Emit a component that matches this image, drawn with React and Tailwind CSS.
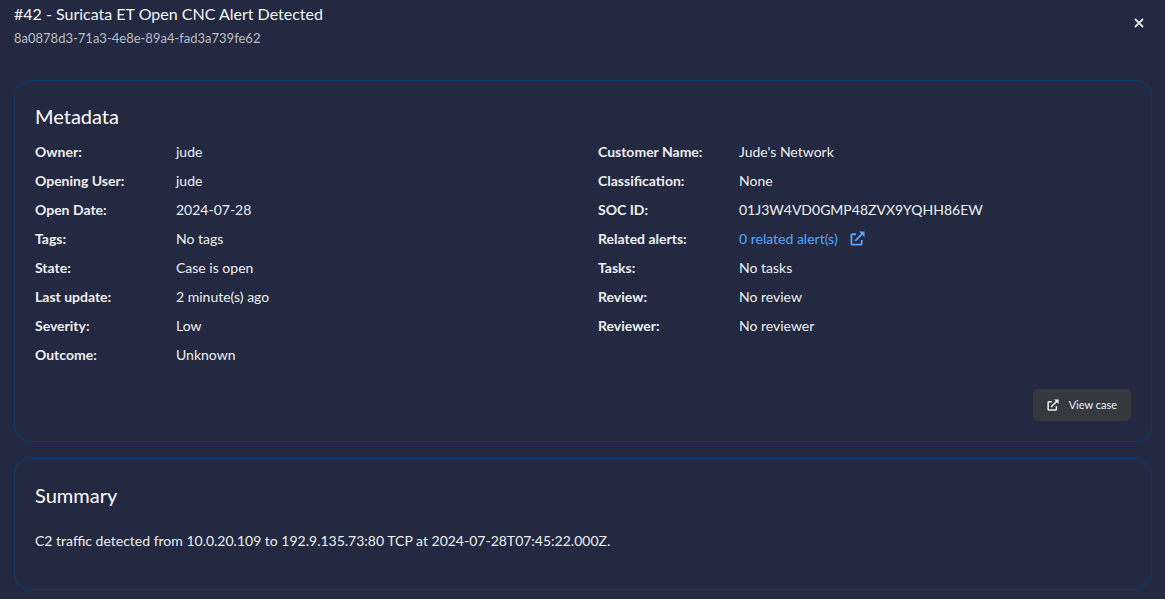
const left = [
  ["Owner:", "jude"],
  ["Opening User:", "jude"],
  ["Open Date:", "2024-07-28"],
  ["Tags:", "No tags"],
  ["State:", "Case is open"],
  ["Last update:", "2 minute(s) ago"],
  ["Severity:", "Low"],
  ["Outcome:", "Unknown"],
];

const right = [
  ["Customer Name:", "Jude's Network"],
  ["Classification:", "None"],
  ["SOC ID:", "01J3W4VD0GMP48ZVX9YQHH86EW"],
  ["Related alerts:", "0 related alert(s)", true],
  ["Tasks:", "No tasks"],
  ["Review:", "No review"],
  ["Reviewer:", "No reviewer"],
];

function ExternalLink({ className }) {
  return (
    <svg viewBox="0 0 16 16" fill="none" stroke="currentColor" strokeWidth="2" className={className} aria-hidden="true">
      <path d="M6.500 3.500H2.500A1 1 0 0 0 1.500 4.500V13.500A1 1 0 0 0 2.500 14.500H11.500A1 1 0 0 0 12.500 13.500V9.500" />
      <path d="M13.500 2.500L5.500 10.500" />
      <path d="M9.500 0.500H15.500V6.500Z" fill="currentColor" stroke="none" />
    </svg>
  );
}

function Details({ rows }) {
  return (
    <dl className="grid auto-rows-[29px] grid-cols-[141px_1fr] items-center">
      {rows.map(([label, value, link]) => (
        <div key={label} className="contents">
          <dt className="font-bold">{label}</dt>
          <dd>
            {link ? (
              <a href="#alerts" className="inline-flex items-center gap-3 text-[#58a6ff]">
                {value}
                <ExternalLink className="size-[15px]" />
              </a>
            ) : (
              value
            )}
          </dd>
        </div>
      ))}
    </dl>
  );
}

export default function App() {
  return (
    <main className="min-h-screen bg-[#222940] pr-[13px] pb-2 pl-3.5 font-[Lato,sans-serif] text-sm text-[#eeeff2]">
      <header className="flex h-20 items-start justify-between">
        <div className="pt-0.5">
          <h1 className="text-base leading-6 text-[#f3f4f6]">#42 - Suricata ET Open CNC Alert Detected</h1>
          <p className="mt-0.5 text-[13px] leading-5 text-[#bcbec5]">8a0878d3-71a3-4e8e-89a4-fad3a739fe62</p>
        </div>
        <button type="button" aria-label="Close" className="mt-2.5 flex size-[26px] items-center justify-center text-[#dcdde0]">
          <svg viewBox="0 0 10 10" className="size-2.5" stroke="currentColor" strokeWidth="2" aria-hidden="true">
            <path d="M1 1l8 8M9 1l-8 8" />
          </svg>
        </button>
      </header>
      <section className="rounded-2xl border border-[#0b3a6a] p-5">
        <h2 className="pt-[3px] pb-[9px] text-xl leading-6 text-white">Metadata</h2>
        <div className="grid grid-cols-2 gap-[30px]">
          <Details rows={left} />
          <Details rows={right} />
        </div>
        <div className="mt-5 flex justify-end">
          <button type="button" className="flex h-8 items-center gap-2.5 rounded-[5px] bg-[#35393f] px-3.5 text-[11px]">
            <ExternalLink className="size-3" />
            View case
          </button>
        </div>
      </section>
      <section className="mt-4 rounded-2xl border border-[#0b3a6a] p-5">
        <h2 className="pt-1 text-xl leading-6 text-white">Summary</h2>
        <p className="mt-5 mb-3.5 leading-7">C2 traffic detected from 10.0.20.109 to 192.9.135.73:80 TCP at 2024-07-28T07:45:22.000Z.</p>
      </section>
    </main>
  );
}
